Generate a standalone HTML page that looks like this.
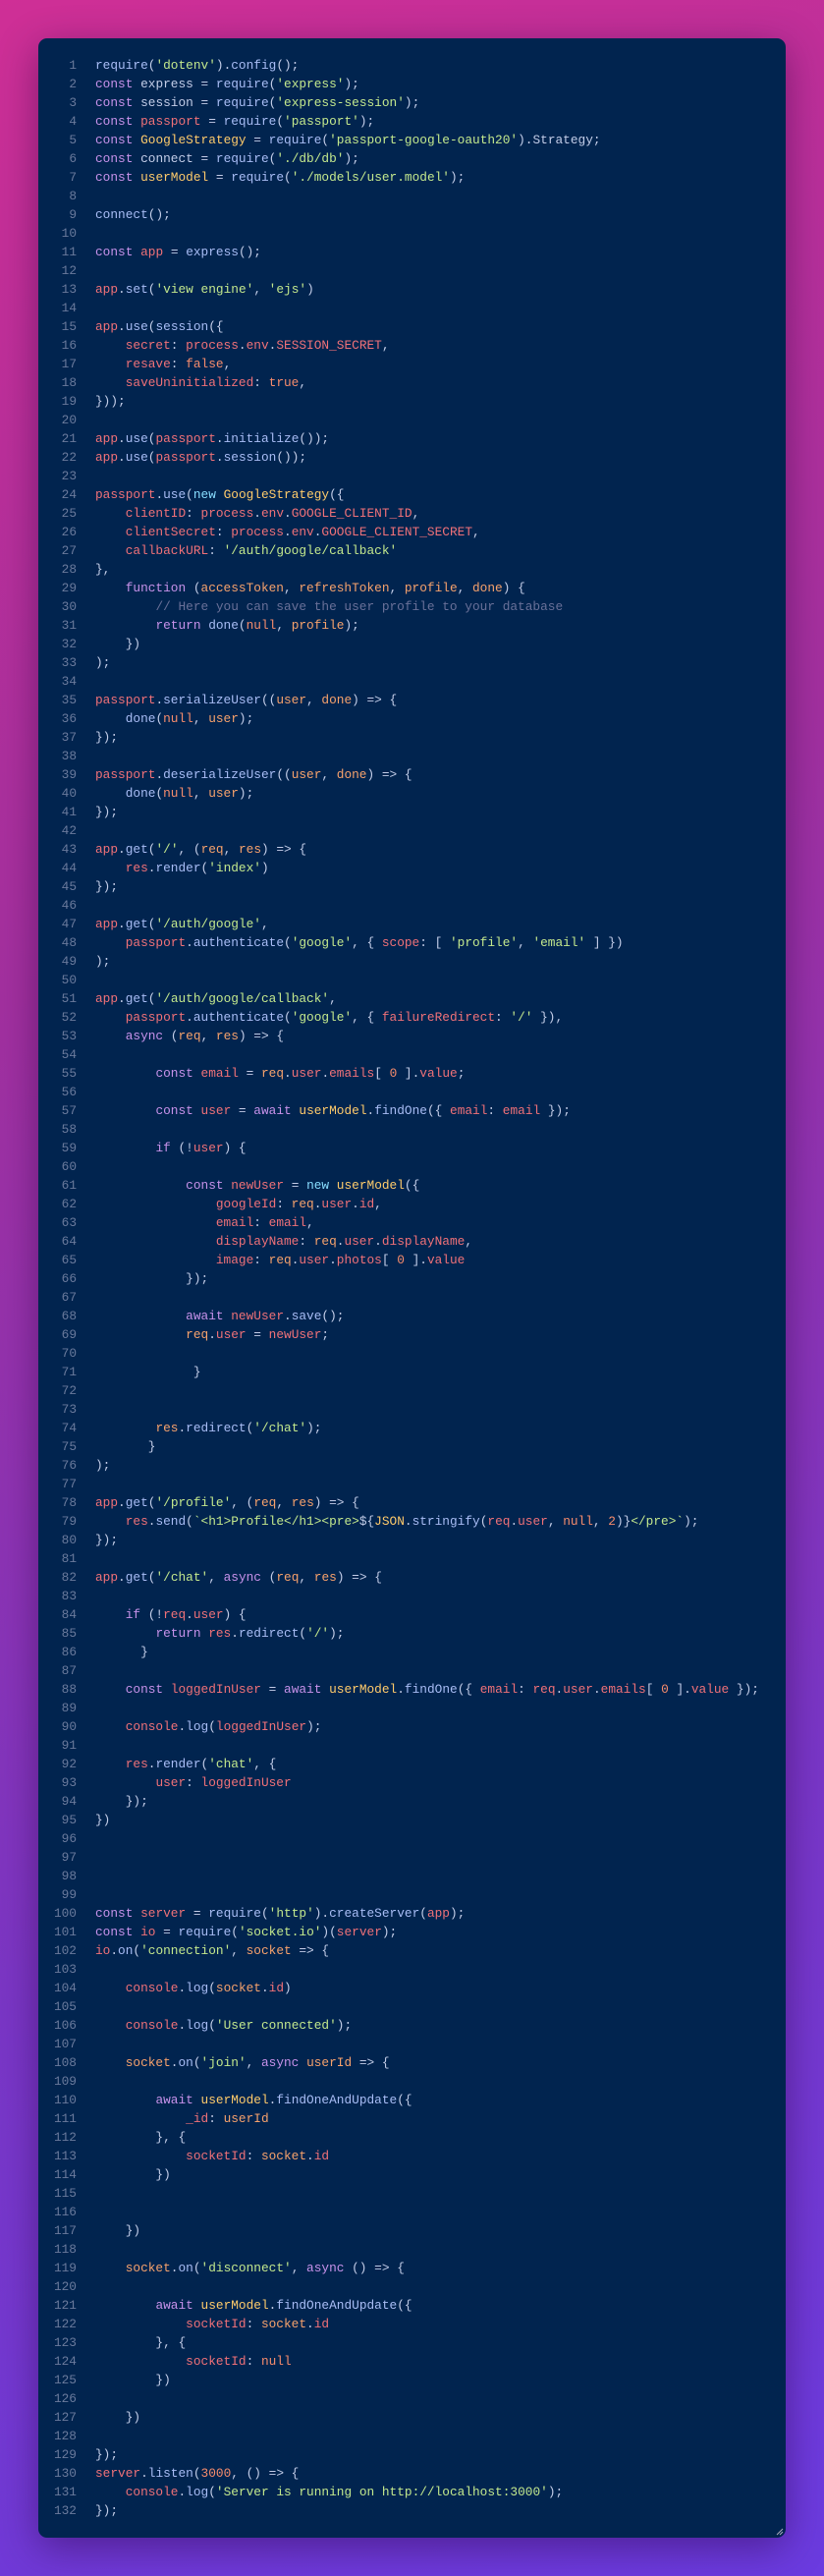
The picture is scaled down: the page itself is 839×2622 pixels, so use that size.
<!DOCTYPE html><html><head><meta charset="utf-8"><style>
html,body{margin:0;padding:0}
body{width:839px;height:2622px;background:linear-gradient(160deg,#cf2f96 0%,#a2309f 35%,#7a36c6 70%,#6b3be0 100%);position:relative;overflow:hidden}
.card{position:absolute;left:39px;top:39px;width:761px;height:2544px;background:#01244f;border-radius:9px;box-shadow:0 10px 40px rgba(40,0,60,.45)}
.code{position:absolute;left:0;top:57px;font-family:"Liberation Mono",monospace;font-size:12.8px;line-height:19px;color:#c3cde8;white-space:pre}
.ln{display:inline-block;width:78px;text-align:right;color:#6a7a9c;margin-right:19px}
.k{color:#c792ea}.n{color:#89ddff}.v{color:#f07178}.p{color:#f7a26c}.c{color:#ffcb6b}.f{color:#a9bdf5}.s{color:#c3e88d}.m{color:#697098}.o{color:#f78c6c}
</style></head><body><div class="card"></div><div class="code" id="c"><div><span class="ln">1</span><span class="f">require</span>(<span class="s">'dotenv'</span>).<span class="f">config</span>();</div><div><span class="ln">2</span><span class="k">const</span> express = <span class="f">require</span>(<span class="s">'express'</span>);</div><div><span class="ln">3</span><span class="k">const</span> session = <span class="f">require</span>(<span class="s">'express-session'</span>);</div><div><span class="ln">4</span><span class="k">const</span> <span class="v">passport</span> = <span class="f">require</span>(<span class="s">'passport'</span>);</div><div><span class="ln">5</span><span class="k">const</span> <span class="c">GoogleStrategy</span> = <span class="f">require</span>(<span class="s">'passport-google-oauth20'</span>).Strategy;</div><div><span class="ln">6</span><span class="k">const</span> connect = <span class="f">require</span>(<span class="s">'./db/db'</span>);</div><div><span class="ln">7</span><span class="k">const</span> <span class="c">userModel</span> = <span class="f">require</span>(<span class="s">'./models/user.model'</span>);</div><div><span class="ln">8</span></div><div><span class="ln">9</span><span class="f">connect</span>();</div><div><span class="ln">10</span></div><div><span class="ln">11</span><span class="k">const</span> <span class="v">app</span> = <span class="f">express</span>();</div><div><span class="ln">12</span></div><div><span class="ln">13</span><span class="v">app</span>.<span class="f">set</span>(<span class="s">'view engine'</span>, <span class="s">'ejs'</span>)</div><div><span class="ln">14</span></div><div><span class="ln">15</span><span class="v">app</span>.<span class="f">use</span>(<span class="f">session</span>({</div><div><span class="ln">16</span>    <span class="v">secret</span>: <span class="v">process</span>.<span class="v">env</span>.<span class="v">SESSION_SECRET</span>,</div><div><span class="ln">17</span>    <span class="v">resave</span>: <span class="o">false</span>,</div><div><span class="ln">18</span>    <span class="v">saveUninitialized</span>: <span class="o">true</span>,</div><div><span class="ln">19</span>}));</div><div><span class="ln">20</span></div><div><span class="ln">21</span><span class="v">app</span>.<span class="f">use</span>(<span class="v">passport</span>.<span class="f">initialize</span>());</div><div><span class="ln">22</span><span class="v">app</span>.<span class="f">use</span>(<span class="v">passport</span>.<span class="f">session</span>());</div><div><span class="ln">23</span></div><div><span class="ln">24</span><span class="v">passport</span>.<span class="f">use</span>(<span class="n">new</span> <span class="c">GoogleStrategy</span>({</div><div><span class="ln">25</span>    <span class="v">clientID</span>: <span class="v">process</span>.<span class="v">env</span>.<span class="v">GOOGLE_CLIENT_ID</span>,</div><div><span class="ln">26</span>    <span class="v">clientSecret</span>: <span class="v">process</span>.<span class="v">env</span>.<span class="v">GOOGLE_CLIENT_SECRET</span>,</div><div><span class="ln">27</span>    <span class="v">callbackURL</span>: <span class="s">'/auth/google/callback'</span></div><div><span class="ln">28</span>},</div><div><span class="ln">29</span>    <span class="k">function</span> (<span class="p">accessToken</span>, <span class="p">refreshToken</span>, <span class="p">profile</span>, <span class="p">done</span>) {</div><div><span class="ln">30</span>        <span class="m">// Here you can save the user profile to your database</span></div><div><span class="ln">31</span>        <span class="k">return</span> <span class="f">done</span>(<span class="o">null</span>, <span class="p">profile</span>);</div><div><span class="ln">32</span>    })</div><div><span class="ln">33</span>);</div><div><span class="ln">34</span></div><div><span class="ln">35</span><span class="v">passport</span>.<span class="f">serializeUser</span>((<span class="p">user</span>, <span class="p">done</span>) =&gt; {</div><div><span class="ln">36</span>    <span class="f">done</span>(<span class="o">null</span>, <span class="p">user</span>);</div><div><span class="ln">37</span>});</div><div><span class="ln">38</span></div><div><span class="ln">39</span><span class="v">passport</span>.<span class="f">deserializeUser</span>((<span class="p">user</span>, <span class="p">done</span>) =&gt; {</div><div><span class="ln">40</span>    <span class="f">done</span>(<span class="o">null</span>, <span class="p">user</span>);</div><div><span class="ln">41</span>});</div><div><span class="ln">42</span></div><div><span class="ln">43</span><span class="v">app</span>.<span class="f">get</span>(<span class="s">'/'</span>, (<span class="p">req</span>, <span class="p">res</span>) =&gt; {</div><div><span class="ln">44</span>    <span class="v">res</span>.<span class="f">render</span>(<span class="s">'index'</span>)</div><div><span class="ln">45</span>});</div><div><span class="ln">46</span></div><div><span class="ln">47</span><span class="v">app</span>.<span class="f">get</span>(<span class="s">'/auth/google'</span>,</div><div><span class="ln">48</span>    <span class="v">passport</span>.<span class="f">authenticate</span>(<span class="s">'google'</span>, { <span class="v">scope</span>: [ <span class="s">'profile'</span>, <span class="s">'email'</span> ] })</div><div><span class="ln">49</span>);</div><div><span class="ln">50</span></div><div><span class="ln">51</span><span class="v">app</span>.<span class="f">get</span>(<span class="s">'/auth/google/callback'</span>,</div><div><span class="ln">52</span>    <span class="v">passport</span>.<span class="f">authenticate</span>(<span class="s">'google'</span>, { <span class="v">failureRedirect</span>: <span class="s">'/'</span> }),</div><div><span class="ln">53</span>    <span class="k">async</span> (<span class="p">req</span>, <span class="p">res</span>) =&gt; {</div><div><span class="ln">54</span></div><div><span class="ln">55</span>        <span class="k">const</span> <span class="v">email</span> = <span class="p">req</span>.<span class="v">user</span>.<span class="v">emails</span>[ <span class="o">0</span> ].<span class="v">value</span>;</div><div><span class="ln">56</span></div><div><span class="ln">57</span>        <span class="k">const</span> <span class="v">user</span> = <span class="k">await</span> <span class="c">userModel</span>.<span class="f">findOne</span>({ <span class="v">email</span>: <span class="v">email</span> });</div><div><span class="ln">58</span></div><div><span class="ln">59</span>        <span class="k">if</span> (!<span class="v">user</span>) {</div><div><span class="ln">60</span></div><div><span class="ln">61</span>            <span class="k">const</span> <span class="v">newUser</span> = <span class="n">new</span> <span class="c">userModel</span>({</div><div><span class="ln">62</span>                <span class="v">googleId</span>: <span class="p">req</span>.<span class="v">user</span>.<span class="v">id</span>,</div><div><span class="ln">63</span>                <span class="v">email</span>: <span class="v">email</span>,</div><div><span class="ln">64</span>                <span class="v">displayName</span>: <span class="p">req</span>.<span class="v">user</span>.<span class="v">displayName</span>,</div><div><span class="ln">65</span>                <span class="v">image</span>: <span class="p">req</span>.<span class="v">user</span>.<span class="v">photos</span>[ <span class="o">0</span> ].<span class="v">value</span></div><div><span class="ln">66</span>            });</div><div><span class="ln">67</span></div><div><span class="ln">68</span>            <span class="k">await</span> <span class="v">newUser</span>.<span class="f">save</span>();</div><div><span class="ln">69</span>            <span class="p">req</span>.<span class="v">user</span> = <span class="v">newUser</span>;</div><div><span class="ln">70</span></div><div><span class="ln">71</span>             }</div><div><span class="ln">72</span></div><div><span class="ln">73</span></div><div><span class="ln">74</span>        <span class="p">res</span>.<span class="f">redirect</span>(<span class="s">'/chat'</span>);</div><div><span class="ln">75</span>       }</div><div><span class="ln">76</span>);</div><div><span class="ln">77</span></div><div><span class="ln">78</span><span class="v">app</span>.<span class="f">get</span>(<span class="s">'/profile'</span>, (<span class="p">req</span>, <span class="p">res</span>) =&gt; {</div><div><span class="ln">79</span>    <span class="v">res</span>.<span class="f">send</span>(<span class="s">`&lt;h1&gt;Profile&lt;/h1&gt;&lt;pre&gt;</span>${<span class="c">JSON</span>.<span class="f">stringify</span>(<span class="v">req</span>.<span class="v">user</span>, <span class="o">null</span>, <span class="o">2</span>)}<span class="s">&lt;/pre&gt;`</span>);</div><div><span class="ln">80</span>});</div><div><span class="ln">81</span></div><div><span class="ln">82</span><span class="v">app</span>.<span class="f">get</span>(<span class="s">'/chat'</span>, <span class="k">async</span> (<span class="p">req</span>, <span class="p">res</span>) =&gt; {</div><div><span class="ln">83</span></div><div><span class="ln">84</span>    <span class="k">if</span> (!<span class="v">req</span>.<span class="v">user</span>) {</div><div><span class="ln">85</span>        <span class="k">return</span> <span class="v">res</span>.<span class="f">redirect</span>(<span class="s">'/'</span>);</div><div><span class="ln">86</span>      }</div><div><span class="ln">87</span></div><div><span class="ln">88</span>    <span class="k">const</span> <span class="v">loggedInUser</span> = <span class="k">await</span> <span class="c">userModel</span>.<span class="f">findOne</span>({ <span class="v">email</span>: <span class="v">req</span>.<span class="v">user</span>.<span class="v">emails</span>[ <span class="o">0</span> ].<span class="v">value</span> });</div><div><span class="ln">89</span></div><div><span class="ln">90</span>    <span class="v">console</span>.<span class="f">log</span>(<span class="v">loggedInUser</span>);</div><div><span class="ln">91</span></div><div><span class="ln">92</span>    <span class="v">res</span>.<span class="f">render</span>(<span class="s">'chat'</span>, {</div><div><span class="ln">93</span>        <span class="v">user</span>: <span class="v">loggedInUser</span></div><div><span class="ln">94</span>    });</div><div><span class="ln">95</span>})</div><div><span class="ln">96</span></div><div><span class="ln">97</span></div><div><span class="ln">98</span></div><div><span class="ln">99</span></div><div><span class="ln">100</span><span class="k">const</span> <span class="v">server</span> = <span class="f">require</span>(<span class="s">'http'</span>).<span class="f">createServer</span>(<span class="v">app</span>);</div><div><span class="ln">101</span><span class="k">const</span> <span class="v">io</span> = <span class="f">require</span>(<span class="s">'socket.io'</span>)(<span class="v">server</span>);</div><div><span class="ln">102</span><span class="v">io</span>.<span class="f">on</span>(<span class="s">'connection'</span>, <span class="p">socket</span> =&gt; {</div><div><span class="ln">103</span></div><div><span class="ln">104</span>    <span class="v">console</span>.<span class="f">log</span>(<span class="p">socket</span>.<span class="v">id</span>)</div><div><span class="ln">105</span></div><div><span class="ln">106</span>    <span class="v">console</span>.<span class="f">log</span>(<span class="s">'User connected'</span>);</div><div><span class="ln">107</span></div><div><span class="ln">108</span>    <span class="p">socket</span>.<span class="f">on</span>(<span class="s">'join'</span>, <span class="k">async</span> <span class="p">userId</span> =&gt; {</div><div><span class="ln">109</span></div><div><span class="ln">110</span>        <span class="k">await</span> <span class="c">userModel</span>.<span class="f">findOneAndUpdate</span>({</div><div><span class="ln">111</span>            <span class="v">_id</span>: <span class="p">userId</span></div><div><span class="ln">112</span>        }, {</div><div><span class="ln">113</span>            <span class="v">socketId</span>: <span class="p">socket</span>.<span class="v">id</span></div><div><span class="ln">114</span>        })</div><div><span class="ln">115</span></div><div><span class="ln">116</span></div><div><span class="ln">117</span>    })</div><div><span class="ln">118</span></div><div><span class="ln">119</span>    <span class="p">socket</span>.<span class="f">on</span>(<span class="s">'disconnect'</span>, <span class="k">async</span> () =&gt; {</div><div><span class="ln">120</span></div><div><span class="ln">121</span>        <span class="k">await</span> <span class="c">userModel</span>.<span class="f">findOneAndUpdate</span>({</div><div><span class="ln">122</span>            <span class="v">socketId</span>: <span class="p">socket</span>.<span class="v">id</span></div><div><span class="ln">123</span>        }, {</div><div><span class="ln">124</span>            <span class="v">socketId</span>: <span class="o">null</span></div><div><span class="ln">125</span>        })</div><div><span class="ln">126</span></div><div><span class="ln">127</span>    })</div><div><span class="ln">128</span></div><div><span class="ln">129</span>});</div><div><span class="ln">130</span><span class="v">server</span>.<span class="f">listen</span>(<span class="o">3000</span>, () =&gt; {</div><div><span class="ln">131</span>    <span class="v">console</span>.<span class="f">log</span>(<span class="s">'Server is running on http://localhost:3000'</span>);</div><div><span class="ln">132</span>});</div></div>
<svg style="position:absolute;left:790px;top:2573px" width="8" height="8"><path d="M1 7L7 1M4 7L7 4" stroke="#aab" stroke-width="1"/></svg>
</body></html>
